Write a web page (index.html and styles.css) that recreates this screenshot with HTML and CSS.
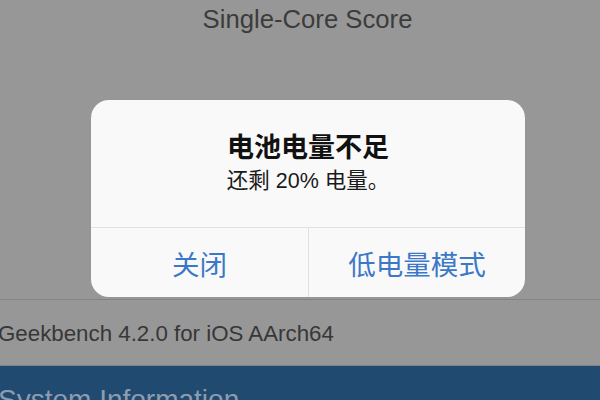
FILE: index.html
```html
<!DOCTYPE html>
<html lang="zh">
<head>
<meta charset="utf-8">
<title>Geekbench</title>
<link rel="stylesheet" href="styles.css">
</head>
<body>
<div class="screen">
  <div class="page-title">Single-Core Score</div>
  <div class="score-area"></div>
  <div class="info-row"><span class="info-text">Geekbench 4.2.0 for iOS AArch64</span></div>
  <div class="section-band"><span class="section-text">System Information</span></div>

  <div class="alert">
    <div class="alert-body">
      <div class="alert-title">电池电量不足</div>
      <div class="alert-message">还剩 20% 电量。</div>
    </div>
    <div class="alert-actions">
      <div class="alert-btn">关闭</div>
      <div class="alert-btn">低电量模式</div>
    </div>
  </div>
</div>
</body>
</html>
```
FILE: styles.css
```css
html, body {
  margin: 0;
  padding: 0;
}
body {
  width: 600px;
  height: 400px;
  overflow: hidden;
  background: #979797;
  font-family: "Liberation Sans", "Noto Sans CJK SC", sans-serif;
}
.screen {
  position: relative;
  width: 600px;
  height: 400px;
  overflow: hidden;
  display: flex;
  flex-direction: column;
  background: #979797;
}
.screen > * {
  flex-shrink: 0;
}
.page-title {
  padding-top: 3px;
  padding-left: 15px;
  height: 32px;
  line-height: 32px;
  font-size: 25.7px;
  color: #3c3c3c;
  text-align: center;
}
.score-area {
  height: 264px;
}
.info-row {
  border-top: 1px solid #848484;
  height: 65px;
  display: flex;
  align-items: center;
  border-bottom: 1px solid #7f8285;
}
.info-text {
  margin-left: -2px;
  margin-top: 2px;
  font-size: 22.3px;
  color: #373737;
}
.section-band {
  height: 40px;
  background: #214a70;
  padding-top: 19px;
  overflow: hidden;
}
.section-text {
  display: block;
  margin-left: -2px;
  font-size: 28px;
  line-height: 30px;
  color: #8d9cae;
}
.alert {
  position: absolute;
  left: 91px;
  top: 100px;
  width: 434px;
  height: 197px;
  border-radius: 18px;
  background: #f9f9f9;
  overflow: hidden;
  display: flex;
  flex-direction: column;
}
.alert-body {
  height: 128px;
  flex-shrink: 0;
  box-sizing: border-box;
  padding-top: 32px;
  text-align: center;
  border-bottom: 1px solid #e0e0e0;
}
.alert-title {
  font-size: 27px;
  line-height: 32px;
  font-weight: 700;
  color: #111111;
}
.alert-message {
  margin-top: 4px;
  font-size: 21.5px;
  line-height: 26px;
  color: #1a1a1a;
}
.alert-actions {
  flex: 1;
  display: grid;
  grid-template-columns: 1fr 1fr;
}
.alert-btn {
  display: flex;
  align-items: center;
  justify-content: center;
  font-size: 27.5px;
  color: #3b78c8;
}
.alert-btn + .alert-btn {
  border-left: 1px solid #e0e0e0;
}
```
